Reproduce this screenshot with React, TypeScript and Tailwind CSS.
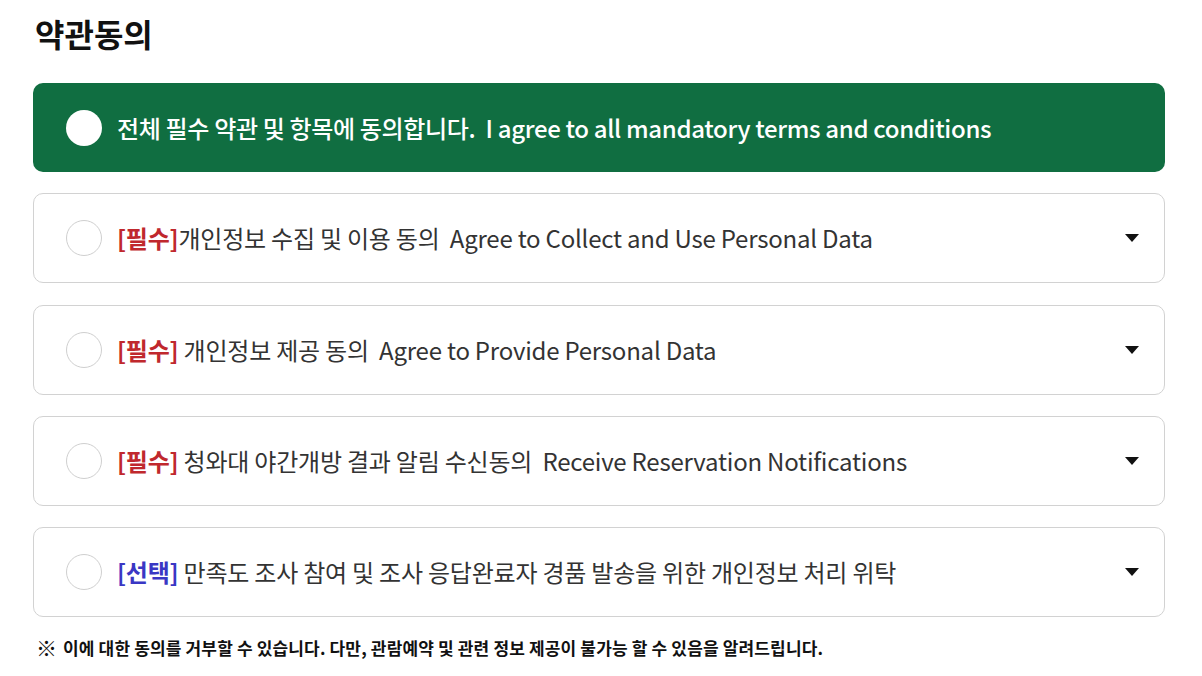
const FONT = "font-['Noto_Sans_CJK_KR','Noto_Sans',sans-serif]";

type Term = { tag: string; tagColor: string; text: string; gap?: boolean };

const terms: Term[] = [
  { tag: '[필수]', tagColor: 'text-[#c0282d]', text: '개인정보 수집 및 이용 동의\u00a0 Agree to Collect and Use Personal Data' },
  { tag: '[필수]', tagColor: 'text-[#c0282d]', text: '개인정보 제공 동의\u00a0 Agree to Provide Personal Data', gap: true },
  { tag: '[필수]', tagColor: 'text-[#c0282d]', text: '청와대 야간개방 결과 알림 수신동의\u00a0 Receive Reservation Notifications', gap: true },
  { tag: '[선택]', tagColor: 'text-[#3a37c4]', text: '만족도 조사 참여 및 조사 응답완료자 경품 발송을 위한 개인정보 처리 위탁', gap: true },
];

function Caret() {
  return (
    <svg width="14" height="8" viewBox="0 0 14 8" className="shrink-0">
      <path d="M0 0 H14 L7 8 Z" fill="#111" />
    </svg>
  );
}

export default function App() {
  return (
    <div className={`${FONT} bg-white w-[1202px] h-[676px] px-[33px] pt-[12px]`}>
      <h1 className="text-[32px] font-bold text-[#111] leading-[42px] pl-[2px]">약관동의</h1>

      <div className="mt-[29px] flex flex-col gap-[21.3px]">
        {/* all agree */}
        <button className="w-[1132px] h-[89px] rounded-[10px] bg-[#106e41] flex items-center pl-[33px] text-left">
          <span className="w-[36px] h-[36px] rounded-full bg-white shrink-0" />
          <span className="ml-[15px] text-[24px] font-medium text-white tracking-[-0.33px]">
            전체 필수 약관 및 항목에 동의합니다.&nbsp; I agree to all mandatory terms and conditions
          </span>
        </button>

        {terms.map((t, i) => (
          <div
            key={i}
            className="w-[1132px] h-[90px] rounded-[10px] border border-[#d2d2d2] bg-white flex items-center pl-[32px] pr-[25px]"
          >
            <span className="w-[36px] h-[36px] rounded-full border border-[#cfcfcf] bg-white shrink-0" />
            <span className="ml-[15px] flex-1 text-[24px] text-[#333] tracking-[-0.22px]">
              <span className={`${t.tagColor} font-bold`}>{t.tag}</span>
              {t.gap ? ' ' : ''}
              {t.text}
            </span>
            <Caret />
          </div>
        ))}
      </div>

      <p className="mt-[18px] pl-[3px] text-[17px] font-bold text-[#111] flex items-center">
        <span className="text-[21px] font-normal leading-none">※</span>
        <span className="ml-[6px] tracking-[0.15px]">이에 대한 동의를 거부할 수 있습니다. 다만, 관람예약 및 관련 정보 제공이 불가능 할 수 있음을 알려드립니다.</span>
      </p>
    </div>
  );
}
